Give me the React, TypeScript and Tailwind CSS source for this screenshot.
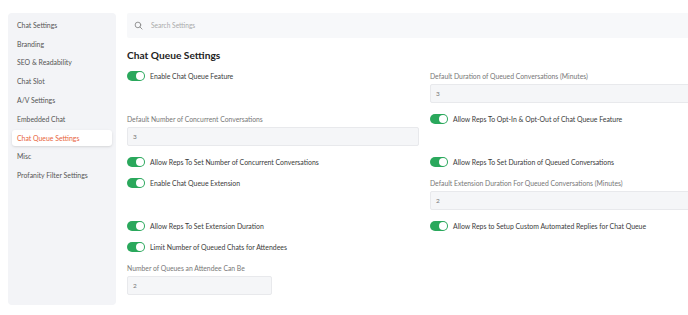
import React from 'react';

const sideItems = [
  'Chat Settings',
  'Branding',
  'SEO & Readability',
  'Chat Slot',
  'A/V Settings',
  'Embedded Chat',
  'Chat Queue Settings',
  'Misc',
  'Profanity Filter Settings',
];

const Toggle: React.FC<{ label: string }> = ({ label }) => (
  <div className="flex h-[10px] items-center gap-[5px]">
    <div className="relative h-[10px] w-[18px] shrink-0 rounded-full bg-[#2aa85c]">
      <div className="absolute right-[1px] top-[1px] size-[8px] rounded-full bg-white" />
    </div>
    <span className="whitespace-nowrap text-[6.9px] leading-[10px] text-[#3a3a3a]">{label}</span>
  </div>
);

const Field: React.FC<{ label: string; value: string; narrow?: boolean }> = ({ label, value, narrow }) => (
  <div className="flex flex-col">
    <span className="mb-[3px] whitespace-nowrap text-[6.8px] leading-[10px] text-[#777]">{label}</span>
    <div
      className={`flex h-[19px] items-center rounded-[2px] border border-[#e8e9ec] bg-[#f5f6f8] px-[5px] text-[6.5px] text-[#777] ${
        narrow ? 'w-[145px]' : 'w-full'
      }`}
    >
      {value}
    </div>
  </div>
);

export default function App() {
  return (
    <div className="h-[315px] w-[688px] overflow-hidden bg-white font-['Lato',sans-serif]">
      <div className="flex w-[740px] pl-[8px] pt-[13px]">
        <aside className="h-[292px] w-[108px] shrink-0 rounded-[4px] bg-[#f3f4f7] px-[4px] pt-[4px]">
          <div className="flex flex-col gap-[2.8px]">
            {sideItems.map((item) => (
              <div
                key={item}
                className={`flex h-[16px] items-center rounded-[3px] pl-[5px] text-[6.9px] ${
                  item === 'Chat Queue Settings' ? 'bg-white text-[#e8643c] shadow-sm' : 'text-[#555]'
                }`}
              >
                {item}
              </div>
            ))}
          </div>
        </aside>

        <main className="ml-[11px] w-[595px] shrink-0">
          <div className="flex h-[25px] items-center gap-[8px] rounded-[2px] bg-[#f7f8fa] pl-[7px]">
            <svg width="9" height="9" viewBox="0 0 24 24" fill="none" stroke="#8a8a8a" strokeWidth="2.4" strokeLinecap="round">
              <circle cx="10.5" cy="10.5" r="7.5" />
              <path d="M16 16l5.5 5.5" />
            </svg>
            <span className="text-[6.6px] text-[#aaa]">Search Settings</span>
          </div>

          <h2 className="mt-[10px] text-[10.2px] font-bold leading-[14px] text-[#222]">Chat Queue Settings</h2>

          <div className="mt-[9px] grid grid-cols-2 items-start gap-x-[11px] gap-y-[11px]">
            <Toggle label="Enable Chat Queue Feature" />
            <Field label="Default Duration of Queued Conversations (Minutes)" value="3" />

            <Field label="Default Number of Concurrent Conversations" value="3" />
            <Toggle label="Allow Reps To Opt-In & Opt-Out of Chat Queue Feature" />

            <Toggle label="Allow Reps To Set Number of Concurrent Conversations" />
            <Toggle label="Allow Reps To Set Duration of Queued Conversations" />

            <Toggle label="Enable Chat Queue Extension" />
            <Field label="Default Extension Duration For Queued Conversations (Minutes)" value="2" />

            <Toggle label="Allow Reps To Set Extension Duration" />
            <Toggle label="Allow Reps to Setup Custom Automated Replies for Chat Queue" />

            <Toggle label="Limit Number of Queued Chats for Attendees" />
            <div />

            <Field label="Number of Queues an Attendee Can Be" value="2" narrow />
          </div>
        </main>
      </div>
    </div>
  );
}
